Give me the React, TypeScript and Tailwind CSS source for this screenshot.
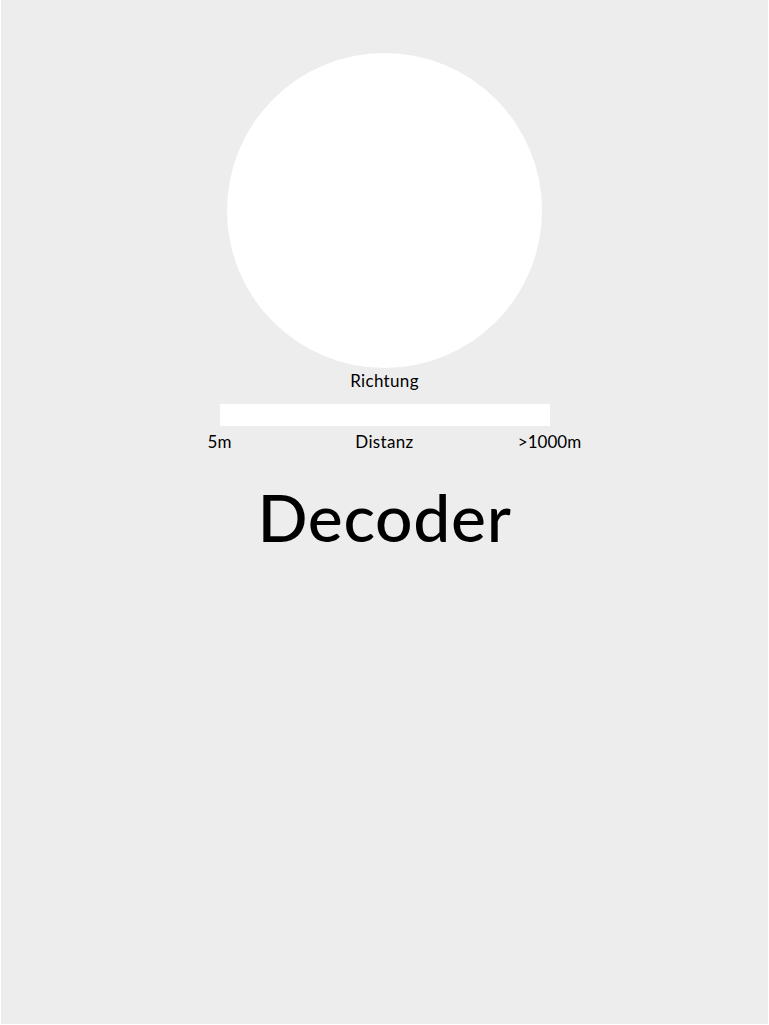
export default function App() {
  return (
    <main className="min-h-screen bg-white px-px pb-px font-['Lato',sans-serif] text-black">
      <div className="flex min-h-[1024px] flex-col items-center bg-[#ededed] pt-[53px]">
        <div className="h-[315px] w-[315px] rounded-full bg-white" />
        <p className="mt-[3px] text-[17px] leading-[20px] tracking-[0.02em]">Richtung</p>
        <div className="mt-[13px] h-[22px] w-[330px] bg-white" />
        <div className="mt-[6px] flex w-[330px] justify-between text-[17px] leading-[20px]">
          <span className="flex w-0 justify-center whitespace-nowrap">5m</span>
          <span className="whitespace-nowrap tracking-[0.02em]">Distanz</span>
          <span className="flex w-0 justify-center whitespace-nowrap">&gt;1000m</span>
        </div>
        <h1 className="mt-[25px] text-[66px] leading-[80px] font-medium tracking-[0.01em]">Decoder</h1>
      </div>
    </main>
  );
}
